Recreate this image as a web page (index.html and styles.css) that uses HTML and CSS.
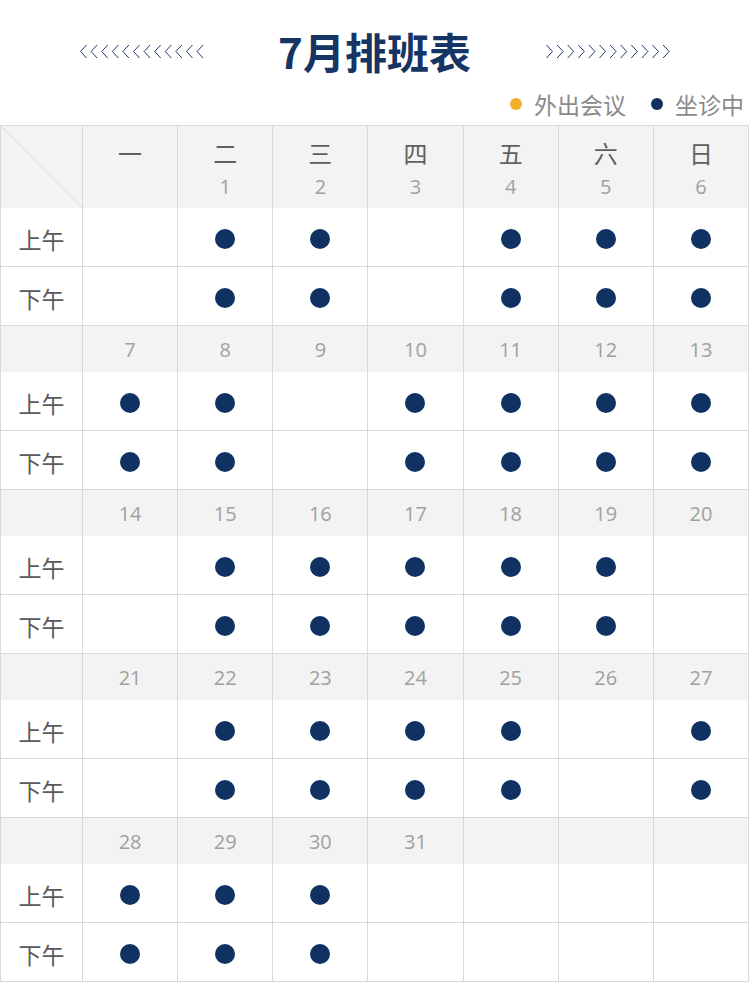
FILE: index.html
```html
<!DOCTYPE html>
<html lang="zh">
<head>
<meta charset="utf-8">
<title>7月排班表</title>
<link rel="stylesheet" href="styles.css">
</head>
<body>
<div class="page">
  <header class="title-row">
    <svg class="chev" width="125" height="15" viewBox="0 0 125 15"><path d="M7.5 1 l-6 6.5 l6 6.5 m10.6 -13 l-6 6.5 l6 6.5 m10.6 -13 l-6 6.5 l6 6.5 m10.6 -13 l-6 6.5 l6 6.5 m10.6 -13 l-6 6.5 l6 6.5 m10.6 -13 l-6 6.5 l6 6.5 m10.6 -13 l-6 6.5 l6 6.5 m10.6 -13 l-6 6.5 l6 6.5 m10.6 -13 l-6 6.5 l6 6.5 m10.6 -13 l-6 6.5 l6 6.5 m10.6 -13 l-6 6.5 l6 6.5 m10.6 -13 l-6 6.5 l6 6.5"/></svg>
    <h1 class="title">7月排班表</h1>
    <svg class="chev" width="125" height="15" viewBox="0 0 125 15"><path d="M1.5 1 l6 6.5 l-6 6.5 m10.6 -13 l6 6.5 l-6 6.5 m10.6 -13 l6 6.5 l-6 6.5 m10.6 -13 l6 6.5 l-6 6.5 m10.6 -13 l6 6.5 l-6 6.5 m10.6 -13 l6 6.5 l-6 6.5 m10.6 -13 l6 6.5 l-6 6.5 m10.6 -13 l6 6.5 l-6 6.5 m10.6 -13 l6 6.5 l-6 6.5 m10.6 -13 l6 6.5 l-6 6.5 m10.6 -13 l6 6.5 l-6 6.5 m10.6 -13 l6 6.5 l-6 6.5"/></svg>
  </header>
  <div class="legend">
    <span class="legend-item"><i class="ldot ldot-out"></i>外出会议</span>
    <span class="legend-item"><i class="ldot ldot-in"></i>坐诊中</span>
  </div>
  <table class="schedule">
    <colgroup><col class="c0"><col><col><col><col><col><col><col></colgroup>
    <tr class="head">
      <td class="corner"><svg class="diag" viewBox="0 0 100 100" preserveAspectRatio="none"><line x1="0" y1="0" x2="100" y2="100"/></svg></td>
      <td><div class="wd">一</div><div class="dt"></div></td>
      <td><div class="wd">二</div><div class="dt">1</div></td>
      <td><div class="wd">三</div><div class="dt">2</div></td>
      <td><div class="wd">四</div><div class="dt">3</div></td>
      <td><div class="wd">五</div><div class="dt">4</div></td>
      <td><div class="wd">六</div><div class="dt">5</div></td>
      <td><div class="wd">日</div><div class="dt">6</div></td>
    </tr>
    <tr class="am"><td class="lbl">上午</td><td></td><td><i class="dot"></i></td><td><i class="dot"></i></td><td></td><td><i class="dot"></i></td><td><i class="dot"></i></td><td><i class="dot"></i></td></tr>
    <tr class="pm"><td class="lbl">下午</td><td></td><td><i class="dot"></i></td><td><i class="dot"></i></td><td></td><td><i class="dot"></i></td><td><i class="dot"></i></td><td><i class="dot"></i></td></tr>

    <tr class="dates"><td></td><td>7</td><td>8</td><td>9</td><td>10</td><td>11</td><td>12</td><td>13</td></tr>
    <tr class="am"><td class="lbl">上午</td><td><i class="dot"></i></td><td><i class="dot"></i></td><td></td><td><i class="dot"></i></td><td><i class="dot"></i></td><td><i class="dot"></i></td><td><i class="dot"></i></td></tr>
    <tr class="pm"><td class="lbl">下午</td><td><i class="dot"></i></td><td><i class="dot"></i></td><td></td><td><i class="dot"></i></td><td><i class="dot"></i></td><td><i class="dot"></i></td><td><i class="dot"></i></td></tr>

    <tr class="dates"><td></td><td>14</td><td>15</td><td>16</td><td>17</td><td>18</td><td>19</td><td>20</td></tr>
    <tr class="am"><td class="lbl">上午</td><td></td><td><i class="dot"></i></td><td><i class="dot"></i></td><td><i class="dot"></i></td><td><i class="dot"></i></td><td><i class="dot"></i></td><td></td></tr>
    <tr class="pm"><td class="lbl">下午</td><td></td><td><i class="dot"></i></td><td><i class="dot"></i></td><td><i class="dot"></i></td><td><i class="dot"></i></td><td><i class="dot"></i></td><td></td></tr>

    <tr class="dates"><td></td><td>21</td><td>22</td><td>23</td><td>24</td><td>25</td><td>26</td><td>27</td></tr>
    <tr class="am"><td class="lbl">上午</td><td></td><td><i class="dot"></i></td><td><i class="dot"></i></td><td><i class="dot"></i></td><td><i class="dot"></i></td><td></td><td><i class="dot"></i></td></tr>
    <tr class="pm"><td class="lbl">下午</td><td></td><td><i class="dot"></i></td><td><i class="dot"></i></td><td><i class="dot"></i></td><td><i class="dot"></i></td><td></td><td><i class="dot"></i></td></tr>

    <tr class="dates"><td></td><td>28</td><td>29</td><td>30</td><td>31</td><td></td><td></td><td></td></tr>
    <tr class="am"><td class="lbl">上午</td><td><i class="dot"></i></td><td><i class="dot"></i></td><td><i class="dot"></i></td><td></td><td></td><td></td><td></td></tr>
    <tr class="pm"><td class="lbl">下午</td><td><i class="dot"></i></td><td><i class="dot"></i></td><td><i class="dot"></i></td><td></td><td></td><td></td><td></td></tr>
  </table>
</div>
</body>
</html>
```

FILE: styles.css
```css
* { box-sizing: border-box; }
html, body { margin: 0; padding: 0; background: #fff; }
body { font-family: "Noto Sans CJK SC", "Noto Sans", sans-serif; }
.page { width: 749px; }

.title-row {
  display: flex;
  justify-content: center;
  align-items: center;
  gap: 74px;
  padding-top: 22px;
  height: 80px;
}
.title {
  margin: 0;
  font-size: 42px;
  line-height: 58px;
  font-weight: 700;
  color: #163464;
  letter-spacing: 0;
}
.chev { display: block; margin-top: 0; }
.chev path { fill: none; stroke: #1d3a6c; stroke-width: 1; }

.legend {
  display: flex;
  justify-content: flex-end;
  gap: 25px;
  padding-right: 5px;
  height: 45px;
  padding-top: 3px;
}
.legend-item {
  display: flex;
  align-items: center;
  font-size: 23px;
  line-height: 26px;
  color: #8a8a8a;
}
.ldot {
  display: inline-block;
  width: 12px;
  height: 12px;
  border-radius: 50%;
  margin-right: 12px;
}
.ldot-out { background: #f0b02a; }
.ldot-in { background: #0f3262; }

.schedule {
  width: 749px;
  border-collapse: separate;
  border-spacing: 0;
  table-layout: fixed;
  border-top: 1px solid #d9d9d9;
  border-left: 1px solid #d9d9d9;
}
.schedule col.c0 { width: 82px; }
.schedule td {
  padding: 0;
  text-align: center;
  vertical-align: middle;
  border-right: 1px solid #d9d9d9;
  border-bottom: 1px solid #d9d9d9;
}
.schedule tr.head td,
.schedule tr.dates td {
  background: #f3f3f3;
  border-bottom: none;
}
.schedule tr.head td { height: 82px; vertical-align: top; }
.schedule tr.head td.corner { position: relative; }
.diag { position: absolute; left: 0; top: 0; width: 100%; height: 100%; }
.diag line { stroke: #dcdcdc; stroke-width: 1; vector-effect: non-scaling-stroke; }
.wd {
  margin-top: 10px;
  font-size: 24px;
  line-height: 34px;
  color: #5f5f5f;
}
.dt {
  margin-top: 3px;
  font-family: "Open Sans", "Noto Sans", sans-serif;
  font-size: 20px;
  line-height: 28px;
  color: #a0a0a0;
}
.schedule tr.dates td {
  height: 46px;
  font-family: "Open Sans", "Noto Sans", sans-serif;
  font-size: 20px;
  color: #a0a0a0;
}
.schedule tr.am td,
.schedule tr.pm td { height: 59px; }
.schedule td.lbl {
  font-size: 23px;
  color: #5a5a5a;
  padding-top: 3px;
}
.dot {
  display: inline-block;
  width: 20px;
  height: 20px;
  border-radius: 50%;
  background: #0f3262;
  vertical-align: middle;
}
```
